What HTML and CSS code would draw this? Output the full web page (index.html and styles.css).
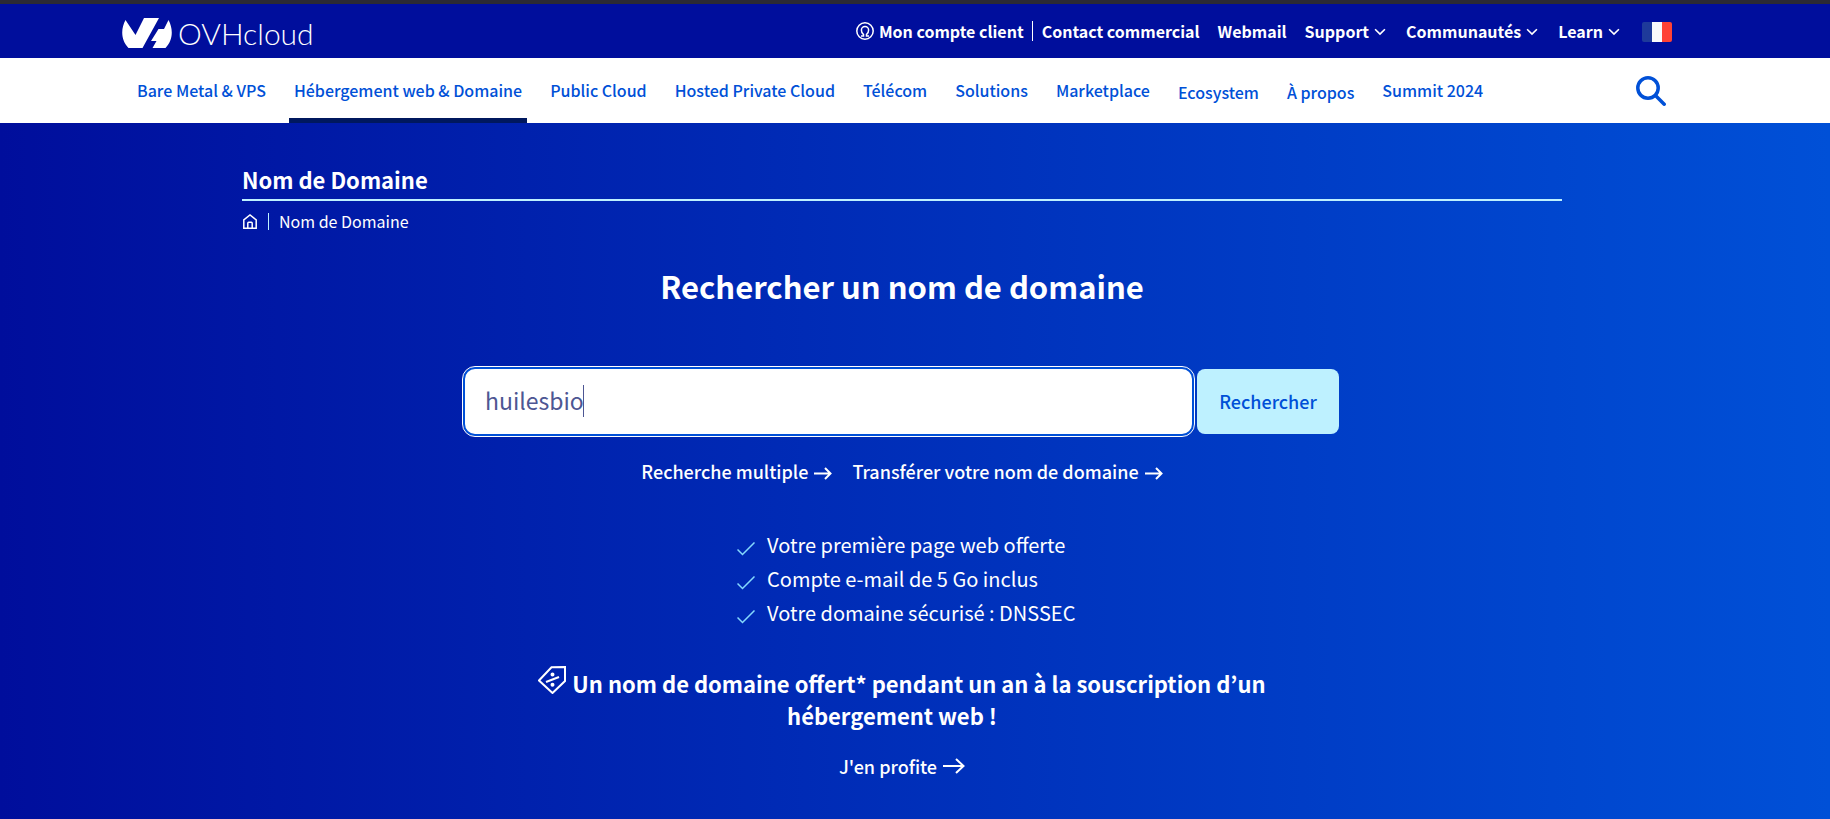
FILE: index.html
```html
<!DOCTYPE html>
<html lang="fr">
<head>
<meta charset="utf-8">
<meta name="viewport" content="width=device-width, initial-scale=1">
<title>Nom de Domaine - OVHcloud</title>
<link rel="stylesheet" href="styles.css">
</head>
<body>
<header>
  <div class="topbar">
    <div class="topbar-inner">
      <a class="logo" href="#" aria-label="OVHcloud">
        <svg class="logo-mark" viewBox="0 0 50 30" aria-hidden="true"><path fill="#fff" d="M3.5 2 13.5 17 22 0H37L20.500 30H6.500C-1 23-1.500 11 3.500 2ZM46.500 2C51.500 11 51 23 43.500 30H30.500L34.500 23H29L36.500 11H42Z"/></svg>
        <span class="logo-text">OVHcloud</span>
      </a>
      <nav class="top-links" aria-label="Liens utilitaires">
        <a class="account" href="#">
          <svg viewBox="0 0 18 18" aria-hidden="true"><circle cx="9" cy="9" r="8.200"/><path d="M5 14h2.500v-1.500C5.800 11.500 5.400 10 5.400 8a3.600 3.600 0 0 1 7.200 0c0 2-.4 3.500-2.100 4.500V14H13"/></svg>
          <span>Mon compte client</span>
        </a>
        <a class="contact" href="#">Contact commercial</a>
        <a class="plain" href="#">Webmail</a>
        <button class="menu" type="button">Support <svg viewBox="0 0 11 7" aria-hidden="true"><path d="m1 1 4.500 4.500L10 1"/></svg></button>
        <button class="menu" type="button">Communautés <svg viewBox="0 0 11 7" aria-hidden="true"><path d="m1 1 4.500 4.500L10 1"/></svg></button>
        <button class="menu" type="button">Learn <svg viewBox="0 0 11 7" aria-hidden="true"><path d="m1 1 4.500 4.500L10 1"/></svg></button>
        <button class="flag" type="button" aria-label="France"><i></i><i></i><i></i></button>
      </nav>
    </div>
  </div>
  <div class="mainbar">
    <nav class="main-nav" aria-label="Navigation principale">
      <a href="#">Bare Metal &amp; VPS</a>
      <a class="active" href="#">Hébergement web &amp; Domaine</a>
      <a href="#">Public Cloud</a>
      <a href="#">Hosted Private Cloud</a>
      <a href="#">Télécom</a>
      <a href="#">Solutions</a>
      <a href="#">Marketplace</a>
      <a class="low" href="#">Ecosystem</a>
      <a class="low" href="#">À propos</a>
      <a href="#">Summit 2024</a>
      <button class="search-toggle" type="button" aria-label="Rechercher sur le site">
        <svg viewBox="0 0 30 30" aria-hidden="true"><circle cx="12" cy="12" r="10.200"/><path d="m19.500 19.500 8.700 8.700"/></svg>
      </button>
    </nav>
  </div>
</header>
<main class="hero">
  <div class="container">
    <p class="page-title">Nom de Domaine</p>
    <nav class="breadcrumb" aria-label="Fil d'Ariane">
      <a href="#" aria-label="Accueil"><svg viewBox="0 0 14 15" aria-hidden="true"><path d="M.800 14.200V5.800L7 1l6.200 4.800v8.400ZM4.800 14V9.200q0-.9.900-.9h2.600q.9 0 .9.900V14"/></svg></a>
      <span>Nom de Domaine</span>
    </nav>
    <h1>Rechercher un nom de domaine</h1>
    <form class="search">
      <label class="field"><input type="text" value="huilesbio" aria-label="Nom de domaine"><i class="caret"></i></label>
      <button type="button">Rechercher</button>
    </form>
    <div class="links">
      <a href="#">Recherche multiple <svg viewBox="0 0 18 13" aria-hidden="true"><path d="M0 6.500h16.500M11 1l5.500 5.500L11 12"/></svg></a>
      <a href="#">Transférer votre nom de domaine <svg viewBox="0 0 18 13" aria-hidden="true"><path d="M0 6.500h16.500M11 1l5.500 5.500L11 12"/></svg></a>
    </div>
    <ul class="benefits">
      <li><svg viewBox="0 0 18 14" aria-hidden="true"><path d="m.500 7.500 5 5 12-12"/></svg>Votre première page web offerte</li>
      <li><svg viewBox="0 0 18 14" aria-hidden="true"><path d="m.500 7.500 5 5 12-12"/></svg>Compte e-mail de 5 Go inclus</li>
      <li><svg viewBox="0 0 18 14" aria-hidden="true"><path d="m.500 7.500 5 5 12-12"/></svg>Votre domaine sécurisé : DNSSEC</li>
    </ul>
    <h2><svg viewBox="0 0 28 28" aria-hidden="true"><path d="M1 14.500 13.500 1.200 27 1v14L14.500 27Z"/><path d="m8 16 13-5"/><circle cx="14.500" cy="8.500" r="1"/><circle cx="14.500" cy="18.800" r="1"/></svg>Un nom de domaine offert* pendant un an à la souscription d’un <span>hébergement web !</span></h2>
    <a class="cta" href="#">J'en profite <svg viewBox="0 0 22 16" aria-hidden="true"><path d="M0 8h20.500M13 1l7.500 7L13 15"/></svg></a>
  </div>
</main>
</body>
</html>
```
FILE: styles.css
```css
* {
  box-sizing: border-box;
}

body {
  display: flex;
  flex-direction: column;
  min-height: 100vh;
  margin: 0;
  font-family: "Noto Sans CJK KR", "Open Sans", sans-serif;
  font-size: 16px;
  color: #fff;
}

a {
  color: inherit;
  text-decoration: none;
}

button {
  padding: 0;
  border: 0;
  background: none;
  color: inherit;
  font: inherit;
}

svg {
  flex: none;
  fill: none;
  stroke: currentColor;
}

.topbar {
  border-top: 4px solid #2b2a33;
  border-bottom: 1px solid #000e9c;
  background: #000e9c;
}

.topbar-inner {
  display: flex;
  align-items: center;
  justify-content: space-between;
  height: 53px;
  padding: 0 158px 0 122px;
}

.logo {
  display: flex;
  align-items: center;
  gap: 6px;
  padding-top: 4px;
}

.logo-mark {
  width: 50px;
  height: 30px;
  stroke: none;
}

.logo-text {
  font-family: "Lato", sans-serif;
  font-weight: 300;
  font-size: 30px;
  line-height: 32px;
}

.top-links {
  display: flex;
  align-items: center;
  font-weight: 700;
  line-height: 24px;
}

.account {
  display: flex;
  align-items: center;
  gap: 5px;
  padding-right: 8px;
  border-right: 1px solid #fff;
  line-height: 20px;
}

.account svg {
  width: 18px;
  height: 18px;
  stroke-width: 1.500;
}

.contact {
  padding-left: 9px;
}

.plain,
.menu {
  margin-left: 18px;
}

.menu {
  display: flex;
  align-items: center;
  gap: 5px;
}

.menu + .menu {
  margin-left: 20px;
}

.menu svg {
  width: 12px;
  height: 8px;
  margin-top: 2px;
  stroke-width: 1.500;
}

.flag {
  display: flex;
  width: 30px;
  height: 20px;
  margin: 3px 0 0 22px;
  border-radius: 2px;
  overflow: hidden;
}

.flag i {
  flex: 1;
  height: 100%;
  background: #1e3a9a;
}

.flag i:nth-child(2) {
  background: #fafafa;
}

.flag i:nth-child(3) {
  background: #ff4235;
}

.mainbar {
  background: #fff;
  color: #0050d7;
}

.main-nav {
  display: flex;
  gap: 18px;
  height: 65px;
  padding: 0 164px 0 132px;
  font-weight: 500;
}

.main-nav a {
  padding: 20px 5px 0;
  line-height: 24px;
  white-space: nowrap;
}

.main-nav .low {
  padding-top: 22px;
}

.main-nav .active {
  border-bottom: 5px solid #00185e;
}

.search-toggle {
  display: flex;
  align-items: center;
  margin-left: auto;
}

.search-toggle svg {
  width: 30px;
  height: 30px;
  stroke-width: 3.500;
  stroke-linecap: round;
}

.hero {
  flex: 1;
  padding: 40px 26px 40px 0;
  background: linear-gradient(90deg, #000e9c, #0050d7);
}

.container {
  width: 100%;
  max-width: 1320px;
  margin: 0 auto;
}

.page-title {
  margin: 0;
  padding-bottom: 4px;
  border-bottom: 2px solid #bef1ff;
  font-weight: 700;
  font-size: 22px;
  line-height: 32px;
}

.breadcrumb {
  display: flex;
  align-items: center;
  margin-top: 8px;
  line-height: 24px;
}

.breadcrumb a {
  display: flex;
  padding: 0 11px 0 1px;
  border-right: 1px solid #bef1ff;
}

.breadcrumb svg {
  width: 14px;
  height: 17px;
  stroke-width: 1.500;
}

.breadcrumb span {
  padding-left: 10px;
}

h1 {
  margin: 31px 0 0;
  font-weight: 700;
  font-size: 31px;
  line-height: 44px;
  text-align: center;
}

.search {
  display: flex;
  justify-content: center;
  gap: 3px;
  margin: 59px 2px 0 0;
}

.field {
  position: relative;
  width: 731px;
}

.field input {
  width: 100%;
  height: 69px;
  padding: 0 20px 3px;
  border: 2px solid #0050d7;
  border-radius: 12px;
  outline: 1px solid #fff;
  background: #fff;
  color: #4d5693;
  font: 400 23px/32px "Noto Sans CJK KR", "Open Sans", sans-serif;
}

.caret {
  position: absolute;
  top: 18px;
  left: 120px;
  width: 1px;
  height: 32px;
  background: #4d5693;
}

.search button {
  width: 142px;
  height: 65px;
  margin-top: 2px;
  padding-bottom: 2px;
  border-radius: 8px;
  background: #bef1ff;
  color: #0050d7;
  font-weight: 500;
  font-size: 18px;
}

.links {
  display: flex;
  justify-content: center;
  gap: 20px;
  margin-top: 21px;
  font-weight: 500;
  font-size: 18px;
  line-height: 28px;
}

.links a,
.cta {
  display: flex;
  align-items: center;
  gap: 6px;
}

.links svg {
  width: 18px;
  height: 13px;
  margin-top: 4px;
  stroke-width: 2;
}

.benefits {
  width: 330px;
  margin: 43px auto 0;
  padding: 0;
  list-style: none;
  font-size: 20px;
  line-height: 34px;
}

.benefits li {
  display: flex;
  align-items: center;
  gap: 12px;
  white-space: nowrap;
}

.benefits svg {
  width: 18px;
  height: 14px;
  margin-top: 8px;
  stroke: #85d9fd;
  stroke-width: 1.500;
}

h2 {
  max-width: 780px;
  margin: 36px auto 0;
  font-weight: 700;
  font-size: 22px;
  line-height: 32px;
  text-align: center;
}

h2 svg {
  width: 28px;
  height: 28px;
  margin: 0 6px -1px 0;
  stroke-width: 2;
}

h2 span {
  padding-right: 20px;
}

.cta {
  width: max-content;
  margin: 21px auto 0;
  font-weight: 500;
  font-size: 18px;
  line-height: 28px;
}

.cta svg {
  width: 22px;
  height: 16px;
  stroke-width: 2;
}
```
